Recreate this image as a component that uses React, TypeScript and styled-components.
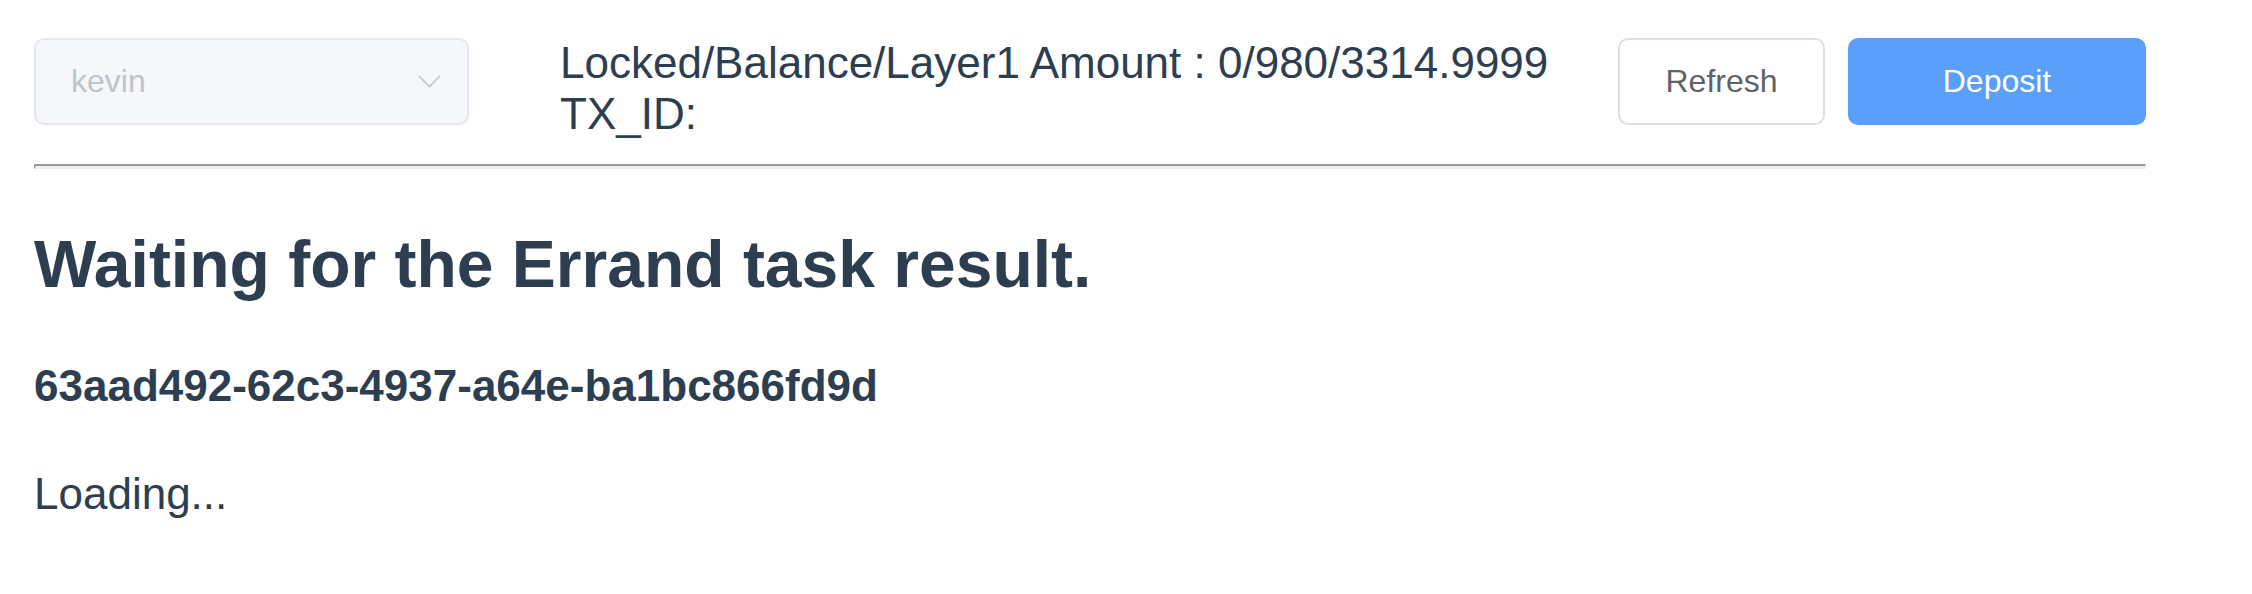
import React from "react";
import styled, { createGlobalStyle } from "styled-components";

const Global = createGlobalStyle`
  html, body { margin: 0; padding: 0; background: #ffffff; }
  body {
    font-family: "Liberation Sans", Arial, Helvetica, sans-serif;
    color: #2c3e50;
  }
`;

const Page = styled.div`
  width: 2112px;
  padding: 38px 0 0 34px;
`;

const TopBar = styled.div`
  display: flex;
  align-items: flex-start;
`;

const Select = styled.div`
  box-sizing: border-box;
  width: 435px;
  height: 87px;
  flex: none;
  display: flex;
  align-items: center;
  justify-content: space-between;
  padding: 0 26px 0 35px;
  background: #f5f7fa;
  border: 2px solid #e4e7ed;
  border-radius: 10px;
  color: #c0c4cc;
  font-size: 32px;
  cursor: not-allowed;
`;

const Chevron = styled.svg`
  width: 23px;
  height: 13px;
  flex: none;
`;

const Info = styled.div`
  flex: 1;
  margin-left: 91px;
  font-size: 44px;
  line-height: 1.149;
  color: #2c3e50;
`;

const Line = styled.div``;

const Actions = styled.div`
  display: flex;
  gap: 23px;
  flex: none;
`;

const Button = styled.button<{ $primary?: boolean; $w: number }>`
  box-sizing: border-box;
  width: ${(p) => p.$w}px;
  height: 87px;
  border-radius: 10px;
  font-family: "Liberation Sans", Arial, Helvetica, sans-serif;
  font-size: 32px;
  padding: 0;
  cursor: pointer;
  border: 2px solid ${(p) => (p.$primary ? "#5a9ff9" : "#dcdfe6")};
  background: ${(p) => (p.$primary ? "#5a9ff9" : "#ffffff")};
  color: ${(p) => (p.$primary ? "#ffffff" : "#606266")};
`;

const Rule = styled.hr`
  margin: 25px 0 0 0;
  height: 0;
  border-style: solid;
  border-width: 2px 1px 3px 2px;
  border-color: #999999 #eeeeee #eeeeee #999999;
`;

const Title = styled.h2`
  margin: 58px 0 0 0;
  font-size: 66px;
  font-weight: 700;
  line-height: 1.149;
  color: #2c3e50;
`;

const TaskId = styled.h4`
  margin: 58px 0 0 0;
  font-size: 44px;
  font-weight: 700;
  line-height: 1.149;
  color: #2c3e50;
`;

const Status = styled.p`
  margin: 58px 0 0 0;
  font-size: 44px;
  line-height: 1.149;
  color: #2c3e50;
`;

export default function App() {
  return (
    <>
      <Global />
      <Page>
        <TopBar>
          <Select>
            <span>kevin</span>
            <Chevron viewBox="0 0 23 13" fill="none">
              <path d="M1 1 L11.5 11.5 L22 1" stroke="#c0c4cc" strokeWidth="1.6" />
            </Chevron>
          </Select>
          <Info>
            <Line>Locked/Balance/Layer1 Amount : 0/980/3314.9999</Line>
            <Line>TX_ID:</Line>
          </Info>
          <Actions>
            <Button $w={207}>Refresh</Button>
            <Button $w={298} $primary>
              Deposit
            </Button>
          </Actions>
        </TopBar>
        <Rule />
        <Title>Waiting for the Errand task result.</Title>
        <TaskId>63aad492-62c3-4937-a64e-ba1bc866fd9d</TaskId>
        <Status>Loading...</Status>
      </Page>
    </>
  );
}
